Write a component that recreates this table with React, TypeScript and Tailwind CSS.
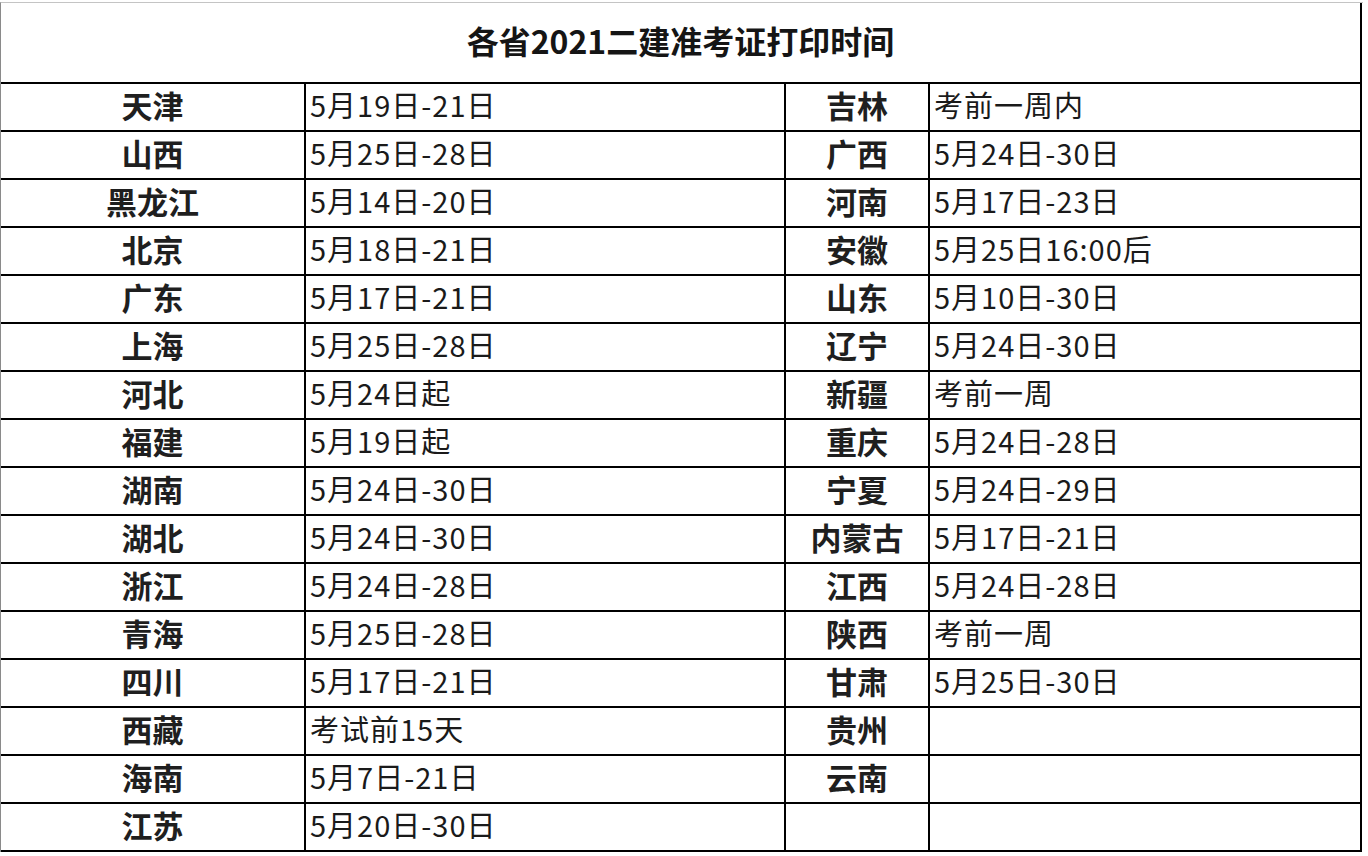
import * as React from "react";

const rows: [string, string, string, string][] = [
  ["天津", "5月19日-21日", "吉林", "考前一周内"],
  ["山西", "5月25日-28日", "广西", "5月24日-30日"],
  ["黑龙江", "5月14日-20日", "河南", "5月17日-23日"],
  ["北京", "5月18日-21日", "安徽", "5月25日16:00后"],
  ["广东", "5月17日-21日", "山东", "5月10日-30日"],
  ["上海", "5月25日-28日", "辽宁", "5月24日-30日"],
  ["河北", "5月24日起", "新疆", "考前一周"],
  ["福建", "5月19日起", "重庆", "5月24日-28日"],
  ["湖南", "5月24日-30日", "宁夏", "5月24日-29日"],
  ["湖北", "5月24日-30日", "内蒙古", "5月17日-21日"],
  ["浙江", "5月24日-28日", "江西", "5月24日-28日"],
  ["青海", "5月25日-28日", "陕西", "考前一周"],
  ["四川", "5月17日-21日", "甘肃", "5月25日-30日"],
  ["西藏", "考试前15天", "贵州", ""],
  ["海南", "5月7日-21日", "云南", ""],
  ["江苏", "5月20日-30日", "", ""],
];

const font = { fontFamily: '"Noto Sans CJK SC", "Noto Sans", sans-serif' };

function NameCell({ text }: { text: string }) {
  return (
    <div className="flex h-[48px] items-center justify-center border-r-2 border-b-2 border-black pb-[6px] text-[31px] leading-none font-bold text-[#1f1f1f]">
      {text}
    </div>
  );
}

function DateCell({ text }: { text: string }) {
  return (
    <div className="flex h-[48px] items-center border-r-2 border-b-2 border-black pb-[6px] pl-[4px] text-[29px] leading-none font-normal tracking-[1px] text-[#1a1a1a]">
      {text}
    </div>
  );
}

export default function App() {
  return (
    <div className="h-[856px] w-[1368px] overflow-hidden bg-white pt-[2px]" style={font}>
      <div className="grid w-[1363px] grid-cols-[305px_480px_144px_432px] border-t border-l border-t-[#c4c4c4] border-l-[#8a8a8a]">
        <div className="col-span-4 flex h-[81px] items-center justify-center border-r-2 border-b-2 border-black pb-[6px] text-[32px] leading-none font-bold text-[#151515]">
          各省2021二建准考证打印时间
        </div>
        {rows.map((r, i) => (
          <React.Fragment key={i}>
            <NameCell text={r[0]} />
            <DateCell text={r[1]} />
            <NameCell text={r[2]} />
            <DateCell text={r[3]} />
          </React.Fragment>
        ))}
      </div>
    </div>
  );
}
